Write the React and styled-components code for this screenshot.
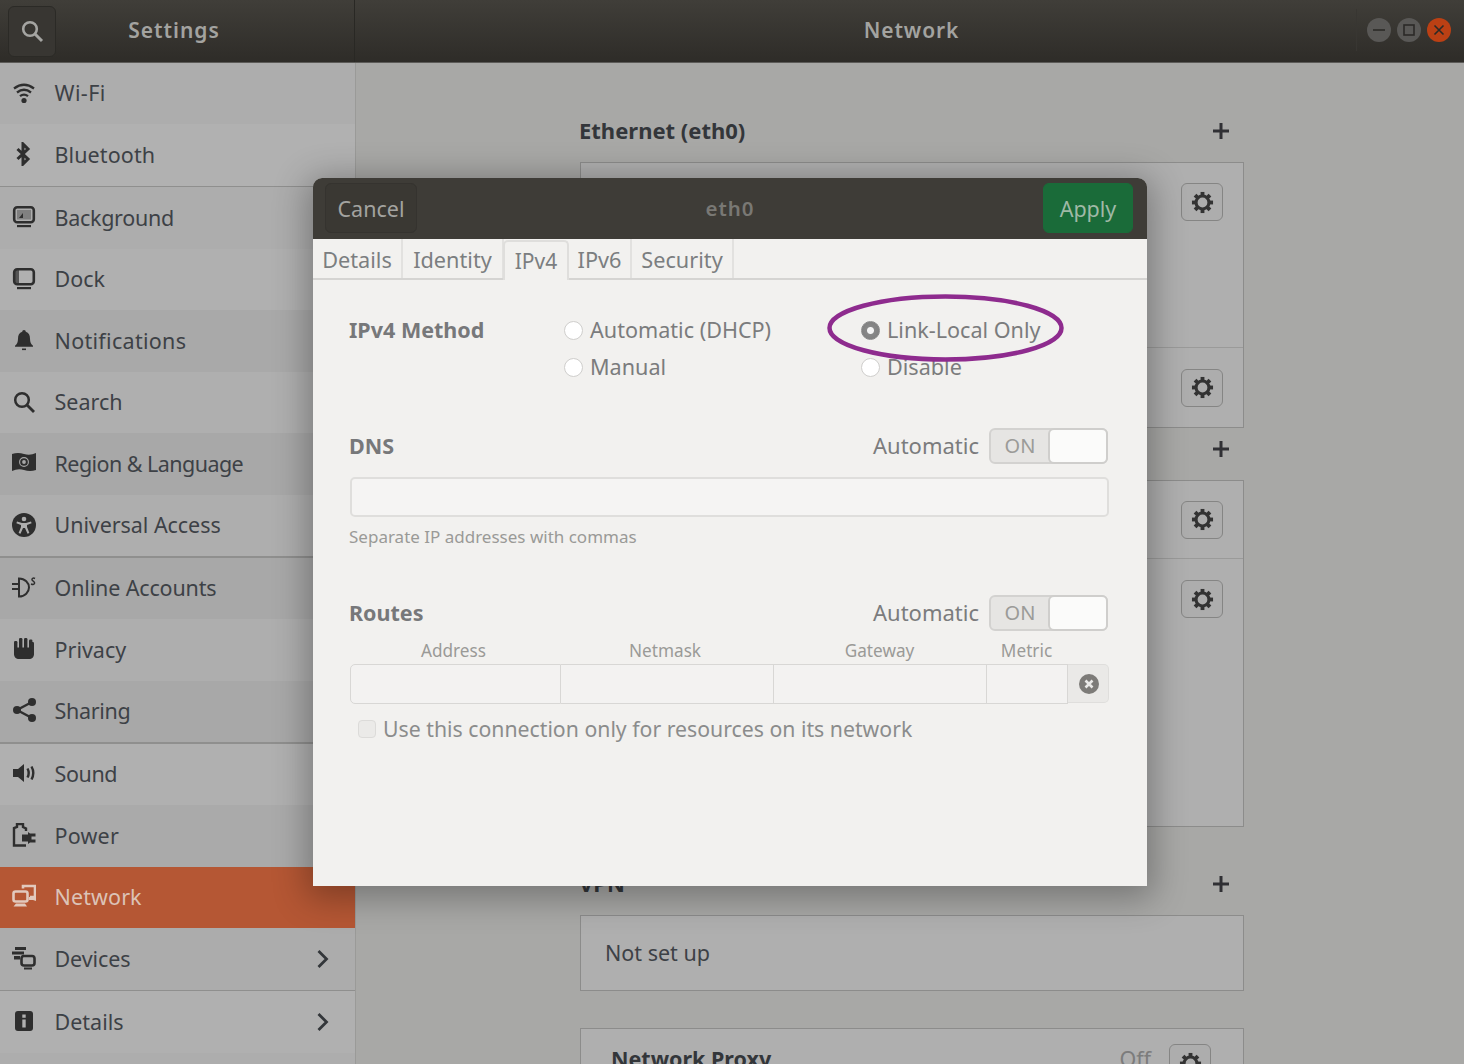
import React from "react";
import styled, { createGlobalStyle } from "styled-components";

const Global = createGlobalStyle`
  html, body { margin: 0; padding: 0; background: #a8a8a6; }
  * { box-sizing: border-box; }
`;
const FONT = `"Noto Sans", "Open Sans", sans-serif`;

const Screen = styled.div`
  position: relative; width: 1464px; height: 1064px; overflow: hidden;
  font-family: ${FONT}; background: #a8a8a6; display: flex; flex-direction: column;
`;
const TitleBar = styled.header`
  height: 63px; flex: none; display: flex;
  background: linear-gradient(#403e39, #2e2c28);
  border-bottom: 1px solid #5c5b58;
`;
const TitleLeft = styled.div`
  width: 355px; flex: none; display: flex; align-items: center; padding-left: 8px;
  border-right: 1px solid #292824; position: relative;
`;
const HeaderSearch = styled.div`
  width: 48px; height: 51px; border: 1px solid #2b2a26; border-radius: 6px; background: #383632;
  display: flex; align-items: center; justify-content: center; color: #a5a5a2;
`;
const LeftTitle = styled.div`
  flex: 1; text-align: center; padding-right: 62px; margin-top: -2px;
  font-size: 21px; font-weight: 600; letter-spacing: 1px; color: #a3a3a0;
`;
const TitleRight = styled.div`
  flex: 1; display: flex; align-items: center; position: relative;
`;
const RightTitle = styled.div`
  flex: 1; text-align: center; padding-left: 4px; margin-top: -2px;
  font-size: 21px; font-weight: 600; letter-spacing: .9px; color: #a3a3a0;
`;
const WindowButtons = styled.div`
  position: absolute; right: 13px; top: 9px; height: 42px; padding-left: 10px;
  border-left: 1px solid #383632; display: flex; gap: 6px; align-items: center;
`;
const WindowButton = styled.div`
  width: 24px; height: 24px; border-radius: 50%;
  background: ${p => (p.$close ? "#bb4014" : "#595856")};
  color: #2b2a27; display: flex; align-items: center; justify-content: center;
`;

const Body = styled.div`flex: 1; display: flex; min-height: 0;`;
const Sidebar = styled.nav`
  width: 356px; flex: none; background: #adadad; border-right: 1px solid #9a9a98;
`;
const Row = styled.div`
  height: 61.47px; display: flex; align-items: center; padding: 0 20px 0 12px; gap: 18.5px;
  background: ${p => p.$selected ? "#b55734" : p.$tone};
  color: ${p => (p.$selected ? "#dcc3b7" : "#3d4146")};
  font-size: 21.5px; line-height: 1;
`;
const RowIcon = styled.svg`
  width: 24px; height: 24px; flex: none; margin-top: -2px;
  color: ${p => (p.$selected ? "#e2c9bd" : "#2e2e2e")};
`;
const RowLabel = styled.span`flex: 1; margin-top: -1px; letter-spacing: ${p => p.$track || 0}px;`;
const Separator = styled.div`height: 1.5px; background: #8f8f8e;`;
const Chevron = styled.svg`width: 20px; height: 24px; color: #33363a; margin-right: 2px;`;

const Main = styled.main`
  flex: 1; display: flex; flex-direction: column; padding: 50px 0 0 224px;
`;
const Section = styled.section`
  width: 664px; flex: none; margin-top: ${p => p.$gap}px;
`;
const SectionHead = styled.div`
  height: 36px; margin-bottom: 13px; display: flex; align-items: center; justify-content: space-between;
  font-size: 22px; font-weight: 700; color: #33363a; padding-right: 15px;
`;
const SectionTitle = styled.span`margin-top: -3px; margin-left: -1px;`;
const Plus = styled.svg`width: 16px; height: 16px; color: #303034;`;
const Card = styled.div`
  height: ${p => p.$h}px; background: #afafaf; border: 1px solid #8c8c8b;
  display: flex; flex-direction: column;
`;
const CardRow = styled.div`
  height: ${p => p.$h}px; flex: none; display: flex; align-items: ${p => p.$top ? "flex-start" : "center"};
  justify-content: flex-end; padding: ${p => p.$top ? "20px" : "0"} 20px 0 24px;
  border-bottom: ${p => (p.$line ? "1px solid #9a9a99" : "none")};
`;
const GearButton = styled.div`
  width: 42px; height: 38px; border: 1px solid #858584; border-radius: 6px; background: #adadad;
  display: flex; align-items: center; justify-content: center; color: #333;
`;
const CardText = styled.div`flex: 1; font-size: 21.5px; color: #3d4146; margin-top: -1px;`;
const ProxyRow = styled.div`
  display: flex; align-items: flex-start; padding: 15px 32px 0 30px; gap: 18px;
`;
const ProxyName = styled.div`flex: 1; font-size: 21.5px; font-weight: 700; color: #33363a;`;
const ProxyState = styled.div`font-size: 21.5px; color: #7c7c7c; margin-top: 0;`;

const Dialog = styled.div`
  position: absolute; left: 313px; top: 178px; width: 834px; height: 708px;
  background: #f2f1ef; border-radius: 9px 9px 0 0;
  box-shadow: 0 6px 34px 6px rgba(0,0,0,.3);
  display: flex; flex-direction: column; overflow: hidden;
`;
const DialogHead = styled.div`
  height: 61px; flex: none; background: #3e3c37; display: flex; align-items: center;
  justify-content: space-between; padding: 0 14px 0 12px; position: relative;
`;
const HeadButton = styled.div`
  height: 50px; width: ${p => p.$w}px; border-radius: 6px; margin-bottom: 1px;
  background: ${p => (p.$green ? "#1a6b39" : "#3a3833")};
  border: 1px solid ${p => (p.$green ? "#1a6b39" : "#35332f")};
  color: ${p => (p.$green ? "#9fb9a6" : "#a3a3a0")};
  display: flex; align-items: center; justify-content: center; font-size: 21.5px;
`;
const DialogTitle = styled.div`
  font-size: 20.5px; font-weight: 600; color: #797874; letter-spacing: 1px; margin-top: -1px;
`;
const Tabs = styled.div`
  height: 41px; flex: none; display: flex; border-bottom: 2px solid #d5d4d2;
`;
const Tab = styled.div`
  width: ${p => p.$w}px; display: flex; align-items: center; justify-content: center;
  font-size: 21.7px; color: #7b7e80; padding-top: 1px;
  border-right: 2px solid #e2e1df;
  ${p => p.$active && `
    margin-top: 1px; border: 2px solid #dfdedc; border-bottom: none; padding-top: 0; font-size: 21px;
    border-radius: 5px 5px 0 0; margin-left: -1px; margin-bottom: -2px; background: #f2f1ef;
  `}
`;
const Content = styled.div`
  flex: 1; padding: 32px 38px 0 36px; color: #7b7c7d;
`;
const MethodGrid = styled.div`
  display: grid; grid-template-columns: 215px 297px 1fr; grid-auto-rows: 37px; align-items: center;
  font-size: 21.6px;
`;
const BoldLabel = styled.div`font-size: 21.5px; font-weight: 700; color: #77787a; margin-top: -2px;`;
const Radio = styled.label`display: flex; align-items: center; gap: 7px; margin-top: -2px;`;
const RadioDot = styled.span`
  width: 19px; height: 19px; border-radius: 50%; flex: none; margin-top: 1px;
  background: ${p => (p.$on ? "radial-gradient(circle, #f4f4f4 0 3px, #888 4px, #7c7c7c)" : "#fff")};
  border: 1.5px solid ${p => (p.$on ? "#8a8a8a" : "#cfcecc")};
`;
const AutoRow = styled.div`
  height: 36px; display: flex; align-items: center; margin-top: ${p => p.$mt}px; padding-right: 1px;
`;
const AutoLabel = styled.div`margin-left: auto; margin-right: 10px; font-size: 22px; margin-top: -2px;`;
const Switch = styled.div`
  width: 119px; height: 36px; border: 2px solid #d3d2d0; border-radius: 6px; background: #e6e5e3;
  display: flex; font-size: 20px; color: #9b9b98;
`;
const SwitchOn = styled.div`flex: 1; display: flex; align-items: center; justify-content: center; padding: 0 1px 2px 0;`;
const SwitchKnob = styled.div`
  width: 60px; margin: -2px; background: #fbfbfa; border: 2px solid #cfcecc; border-radius: 6px;
`;
const Entry = styled.div`
  height: 40px; margin: 13px 0 0 1px; background: #f5f4f3; border: 2px solid #dfdedc; border-radius: 5px;
`;
const Helper = styled.div`height: 24px; margin-top: 8px; font-size: 17px; line-height: 24px; color: #9a9a97;`;
const RouteHeads = styled.div`
  display: grid; grid-template-columns: 207px 216px 213px 81px 41px; margin: 9px 0 2px 1px; height: 22px;
  font-size: 17.2px; line-height: 22px; color: #9a9a97; text-align: center;
`;
const RouteRow = styled.div`
  display: grid; grid-template-columns: 211px 213px 213px 81px 41px; height: 40px; margin-left: 1px;
`;
const RouteCell = styled.div`
  background: #f3f2f1; border: 1.5px solid #d8d7d5; border-left: ${p => p.$first ? "1.5px solid #d8d7d5" : "none"};
  border-radius: ${p => (p.$first ? "5px 0 0 5px" : "0")};
`;
const RouteRemove = styled.div`
  height: 39px; background: #eae9e7; border: 1.5px solid #dfdedc; border-left: none; border-radius: 0 5px 5px 0;
  display: flex; align-items: center; justify-content: center; color: #7d7b78; padding-left: 1px;
`;
const CheckRow = styled.label`
  display: flex; align-items: center; gap: 7px; margin: 10px 0 0 9px; height: 28px; font-size: 21.25px; color: #8b8c8c;
`;
const CheckBox = styled.span`
  width: 18px; height: 18px; border: 1.5px solid #dcdbd9; border-radius: 4px; background: #ebeae8; margin-top: 2px;
`;
const Highlight = styled.svg`
  position: absolute; left: 826px; top: 293px; width: 240px; height: 72px; overflow: visible;
`;

const I = ({ children, selected }) => (
  <RowIcon $selected={selected} viewBox="0 0 24 24" fill="currentColor">{children}</RowIcon>
);
const S = { fill: "none", stroke: "currentColor", strokeWidth: 2.3 };

const icons = {
  wifi: <>
    <path {...S} d="M2 7.5Q12 0 22 7.5M5 11.5Q12 6 19 11.5M8 15.2Q12 12 16 15.2" strokeWidth="2.3" />
    <circle cx="12" cy="19.5" r="2.6" />
  </>,
  bt: <path {...S} strokeWidth="3" d="M5.5 7l10.5 10-5 5V2l5 5L5.5 17" />,
  bg: <>
    <rect {...S} x="2.2" y="2.2" width="19.6" height="15" rx="3" strokeWidth="2.6" />
    <rect x="5" y="5" width="14" height="9.5" opacity=".35" />
    <path d="M7 13l4-5v5z" />
    <path d="M5 20h14v2.2H5z" />
  </>,
  dock: <>
    <rect {...S} x="2.2" y="2.2" width="19.6" height="15" rx="3" strokeWidth="2.6" />
    <path d="M3 3h4v13H3z" opacity=".7" />
    <path d="M5 20h14v2.2H5z" />
  </>,
  bell: <>
    <path d="M12 2a1.8 1.8 0 0 1 1.8 1.8c3 1 4.2 3.6 4.2 7 0 3.3 1 5.4 3 7v1H3v-1c2-1.6 3-3.7 3-7 0-3.4 1.2-6 4.2-7A1.8 1.8 0 0 1 12 2z" />
    <path d="M10 20.5h4v1.6h-4z" />
  </>,
  search: <>
    <circle {...S} cx="10" cy="10" r="6.8" strokeWidth="2.5" />
    <path {...S} d="M15 15l7 7" strokeWidth="2.8" />
  </>,
  region: <>
    <path d="M0 3q6-2 12 0t12-1v17q-6 2-12 0t-12 1z" />
    <circle cx="12" cy="11" r="4.4" fill="none" stroke="#a8a8a8" strokeWidth="1.1" />
    <circle cx="12" cy="11" r="1.9" fill="#a8a8a8" />
  </>,
  access: <>
    <circle cx="12" cy="12" r="12" />
    <circle cx="12" cy="6" r="2.3" fill="#aeaeae" />
    <path d="M5 8.5l5 1.5h4l5-1.5.6 1.8-4.6 1.7v2l2.4 6-1.9.7L13 15h-2l-2.5 5.7-1.9-.7L9 14v-2l-4.6-1.7z" fill="#aeaeae" />
  </>,
  online: <>
    <path {...S} strokeWidth="2" d="M0 9h7M0 14h7M7 3.5v18c6 0 10-4.5 10-9s-4-9-10-9z" />
    <path {...S} strokeWidth="1.5" d="M23 3.5c-2-1-3.3 0-3 1.3s3 1.6 2.6 3.4-2.2 1.4-3.6.8" />
  </>,
  privacy: <>
    <path d="M2 10.5h20V17c0 3-2 5-5 5H7c-3 0-5-2-5-5z" />
    <rect x="2" y="4" width="3.4" height="9" rx="1.2" />
    <rect x="7" y="1" width="3.4" height="11" rx="1.2" />
    <rect x="12" y="1" width="3.4" height="11" rx="1.2" />
    <rect x="17" y="2.5" width="3.4" height="10" rx="1.2" />
    <rect x="18.6" y="5" width="3.4" height="8" rx="1.2" />
  </>,
  share: <>
    <circle cx="5" cy="12" r="4" /><circle cx="20" cy="4" r="4" /><circle cx="20" cy="20" r="4" />
    <path {...S} strokeWidth="2.4" d="M20 4L5 12l15 8" />
  </>,
  sound: <>
    <path d="M1 8h5l6-5v18l-6-5H1z" />
    <path {...S} strokeWidth="2.4" d="M15.5 7.5c1.6 3 1.6 6 0 9" />
    <path {...S} strokeWidth="2.4" d="M19.5 5.5c2.2 4 2.2 9 0 13" />
  </>,
  power: <>
    <path {...S} strokeWidth="2.4" d="M14 22.5H2V5l3-1V1h6v3l3 1.5V8" />
    <path d="M10 11.5h6V9l2 1.5h5.5v3h-4v3h4v3H18L16 21v-2.5h-6z" />
  </>,
  network: <>
    <rect {...S} x="1.5" y="7.5" width="14" height="10" rx="2" strokeWidth="2.6" />
    <path d="M4 19.5h9l2 3H1.5z" />
    <path {...S} strokeWidth="2.6" d="M11 4.5V2h12v11h-5" />
    <path d="M17 13h7v4l-3-1h-4z" />
  </>,
  devices: <>
    <path d="M3 1h11v3H3zM0 5.5h12v3H0zM2 10h6v3.4H2z" />
    <rect {...S} x="9.5" y="10" width="13" height="9.5" rx="2.5" strokeWidth="2.6" />
    <path d="M12 21.5h8v2h-8z" />
  </>,
  info: <>
    <rect x="3" y="2" width="18" height="20" rx="3" />
    <path d="M10.3 5.5h3.4v3.2h-3.4zM10.3 10.5h3.4v8h-3.4z" fill="#b0b0b0" />
  </>,
};

const ROWS = [
  ["Wi-Fi", "wifi", "#adadad", 0, .4],
  ["Bluetooth", "bt", "#b1b1b1", 1, .1],
  ["Background", "bg", "#adadad", 0, -.3],
  ["Dock", "dock", "#b0b0b0", 0, 0],
  ["Notifications", "bell", "#a9a9a9", 0, .3],
  ["Search", "search", "#afafaf", 0, 0],
  ["Region & Language", "region", "#a8a8a8", 0, -.55],
  ["Universal Access", "access", "#aeaeae", 1, -.06],
  ["Online Accounts", "online", "#a8a8a8", 0, -.15],
  ["Privacy", "privacy", "#aeaeae", 0, 0],
  ["Sharing", "share", "#a8a8a8", 1, -.3],
  ["Sound", "sound", "#b0b0b0", 0, -.4],
  ["Power", "power", "#aaaaaa", 0, .2],
  ["Network", "network", "#b55734", 0, .1],
  ["Devices", "devices", "#acacac", 1, -.1],
  ["Details", "info", "#b0b0b0", 0, 0],
];

const Gear = ({ size = 23 }) => (
  <svg width={size} height={size} viewBox="0 0 24 24">
    {[0, 45, 90, 135, 180, 225, 270, 315].map(a => (
      <rect key={a} x="10" y="1" width="4" height="5" fill="currentColor" transform={`rotate(${a} 12 12)`} />
    ))}
    <circle cx="12" cy="12" r="6.7" fill="none" stroke="currentColor" strokeWidth="3.2" />
  </svg>
);
const GearBtn = () => <GearButton><Gear /></GearButton>;
const AddIcon = () => (
  <Plus viewBox="0 0 16 16" fill="currentColor"><path d="M6.5 0h3v6.5H16v3H9.5V16h-3V9.5H0v-3h6.5z" /></Plus>
);

export default function App() {
  return (
    <Screen>
      <Global />
      <TitleBar>
        <TitleLeft>
          <HeaderSearch>
            <svg width="24" height="24" viewBox="0 0 24 24" fill="none" stroke="currentColor">
              <circle cx="10" cy="10" r="6.8" strokeWidth="2.6" />
              <path d="M15 15l7 7" strokeWidth="3" />
            </svg>
          </HeaderSearch>
          <LeftTitle>Settings</LeftTitle>
        </TitleLeft>
        <TitleRight>
          <RightTitle>Network</RightTitle>
          <WindowButtons>
            <WindowButton><svg width="14" height="14" viewBox="0 0 14 14"><path d="M1 7h12" stroke="currentColor" strokeWidth="1.6" /></svg></WindowButton>
            <WindowButton><svg width="14" height="14" viewBox="0 0 14 14"><rect x="2" y="2" width="10" height="10" fill="none" stroke="currentColor" strokeWidth="1.6" /></svg></WindowButton>
            <WindowButton $close><svg width="14" height="14" viewBox="0 0 14 14"><path d="M2.5 2.5l9 9M11.5 2.5l-9 9" stroke="currentColor" strokeWidth="1.6" /></svg></WindowButton>
          </WindowButtons>
        </TitleRight>
      </TitleBar>
      <Body>
        <Sidebar>
          {ROWS.map(([label, icon, tone, sep, track]) => (
            <React.Fragment key={label}>
              <Row $tone={tone} $selected={label === "Network"}>
                <I selected={label === "Network"}>{icons[icon]}</I>
                <RowLabel $track={track}>{label}</RowLabel>
                {(label === "Devices" || label === "Details") && (
                  <Chevron viewBox="0 0 20 24" fill="none" stroke="currentColor" strokeWidth="2.8"><path d="M5.5 4l8 8-8 8" /></Chevron>
                )}
              </Row>
              {sep ? <Separator /> : null}
            </React.Fragment>
          ))}
        </Sidebar>
        <Main>
          <Section $gap={0}>
            <SectionHead><SectionTitle>Ethernet (eth0)</SectionTitle><AddIcon /></SectionHead>
            <Card $h={266}>
              <CardRow $h={185} $top $line><GearBtn /></CardRow>
              <CardRow $h={79}><GearBtn /></CardRow>
            </Card>
          </Section>
          <Section $gap={3}>
            <SectionHead><span />
              <AddIcon /></SectionHead>
            <Card $h={347}>
              <CardRow $h={78} $line><GearBtn /></CardRow>
              <CardRow $h={80}><GearBtn /></CardRow>
            </Card>
          </Section>
          <Section $gap={39}>
            <SectionHead><SectionTitle>VPN</SectionTitle><AddIcon /></SectionHead>
            <Card $h={76}>
              <CardRow $h={74}><CardText>Not set up</CardText></CardRow>
            </Card>
          </Section>
          <Section $gap={37}>
            <Card $h={80}>
              <ProxyRow>
                <ProxyName>Network Proxy</ProxyName>
                <ProxyState>Off</ProxyState>
                <GearButton><Gear /></GearButton>
              </ProxyRow>
            </Card>
          </Section>
        </Main>
      </Body>

      <Dialog>
        <DialogHead>
          <HeadButton $w={92}>Cancel</HeadButton>
          <DialogTitle>eth0</DialogTitle>
          <HeadButton $w={90} $green>Apply</HeadButton>
        </DialogHead>
        <Tabs>
          <Tab $w={90}>Details</Tab>
          <Tab $w={101}>Identity</Tab>
          <Tab $w={66} $active>IPv4</Tab>
          <Tab $w={63}>IPv6</Tab>
          <Tab $w={102}>Security</Tab>
        </Tabs>
        <Content>
          <MethodGrid>
            <BoldLabel>IPv4 Method</BoldLabel>
            <Radio><RadioDot />Automatic (DHCP)</Radio>
            <Radio><RadioDot $on />Link-Local Only</Radio>
            <span />
            <Radio><RadioDot />Manual</Radio>
            <Radio><RadioDot />Disable</Radio>
          </MethodGrid>
          <AutoRow $mt={42}>
            <BoldLabel>DNS</BoldLabel>
            <AutoLabel>Automatic</AutoLabel>
            <Switch><SwitchOn>ON</SwitchOn><SwitchKnob /></Switch>
          </AutoRow>
          <Entry />
          <Helper>Separate IP addresses with commas</Helper>
          <AutoRow $mt={46}>
            <BoldLabel>Routes</BoldLabel>
            <AutoLabel>Automatic</AutoLabel>
            <Switch><SwitchOn>ON</SwitchOn><SwitchKnob /></Switch>
          </AutoRow>
          <RouteHeads>
            <span>Address</span><span>Netmask</span><span>Gateway</span><span>Metric</span><span />
          </RouteHeads>
          <RouteRow>
            <RouteCell $first /><RouteCell /><RouteCell /><RouteCell />
            <RouteRemove>
              <svg width="22" height="22" viewBox="0 0 22 22">
                <circle cx="11" cy="11" r="10" fill="currentColor" />
                <path d="M7.5 7.5l7 7M14.5 7.5l-7 7" stroke="#eae9e7" strokeWidth="2.6" />
              </svg>
            </RouteRemove>
          </RouteRow>
          <CheckRow><CheckBox />Use this connection only for resources on its network</CheckRow>
        </Content>
      </Dialog>
      <Highlight viewBox="0 0 240 72">
        <ellipse cx="119.5" cy="35" rx="116" ry="31.5" fill="none" stroke="#8e2b8e" strokeWidth="4.5" />
      </Highlight>
    </Screen>
  );
}
